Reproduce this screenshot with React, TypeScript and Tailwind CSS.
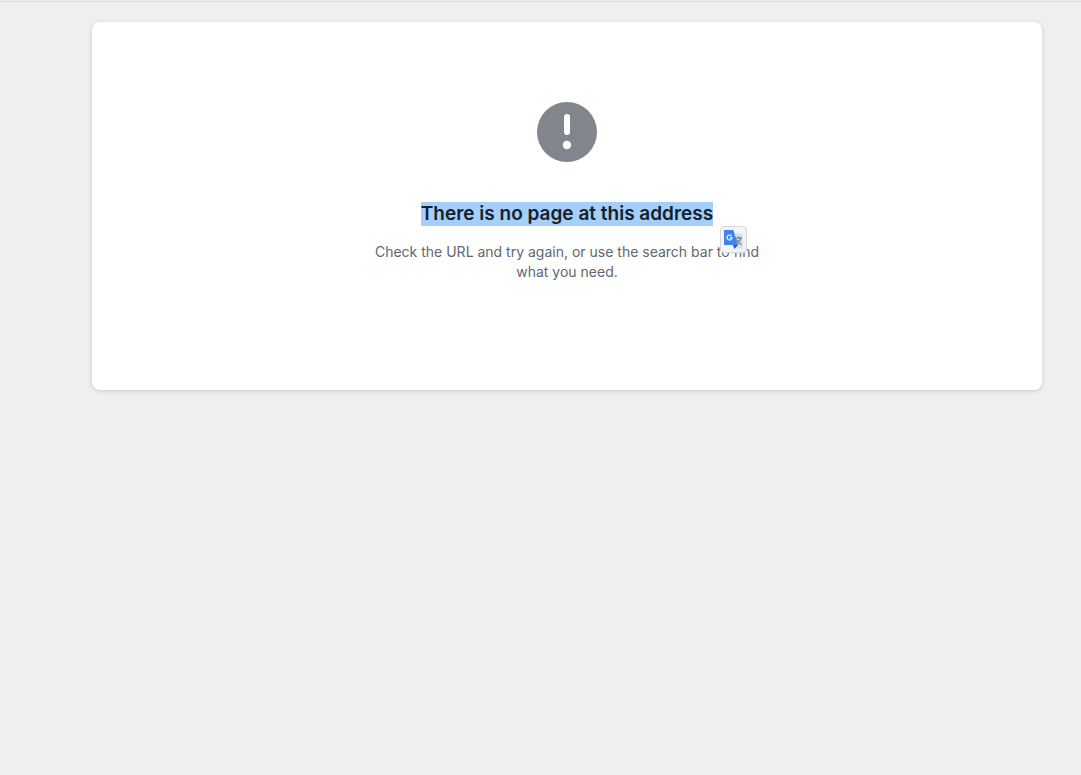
export default function App() {
  return (
    <div className="min-h-screen bg-[#eeeff1] font-['Inter',sans-serif]">
      <header className="h-0.5 border-b border-[#d9dbde]" />
      <main className="pt-5 pr-[39px] pb-5 pl-[92px]">
        <section className="flex flex-col items-center rounded-lg bg-white px-4 pt-20 pb-[108px] text-center shadow-[0_1px_4px_rgba(0,0,0,0.16)]">
          <svg viewBox="0 0 60 60" className="size-[60px]" aria-hidden="true">
            <circle cx="30" cy="30" r="30" fill="#81858c" />
            <rect x="27" y="12" width="6" height="21" rx="3" fill="#fff" />
            <circle cx="30" cy="43" r="4.2" fill="#fff" />
          </svg>
          <div className="relative mt-10">
            <h1 className="bg-[#a4cffa] text-[19px] leading-6 font-semibold text-[#14202b]">
              There is no page at this address
            </h1>
            <button
              type="button"
              aria-label="Translate"
              className="absolute top-6 left-full ml-[7px] flex size-[27px] items-center justify-center rounded border border-[#d6d8dc] bg-[#f3f4f6]"
            >
              <svg viewBox="0 0 19 19" className="size-[19px]" aria-hidden="true">
                <path d="M8 3.5h10.3a.7.7 0 0 1 .7.7v13.6a.7.7 0 0 1-.7.7H10z" fill="#dcdfe3" />
                <path d="M11 8h7M14.5 6.5V8M16.8 8c-.6 2.700-2.300 4.700-4.500 6M12.800 9.500c.8 2.200 2.300 3.800 4.500 5" fill="none" stroke="#5f6f7c" strokeWidth="1.1" />
                <path d="M9 15h5l-3.700 4z" fill="#2855c8" />
                <path d="M.7 0h8.600L14 15H.7a.7.7 0 0 1-.7-.7V.7A.7.7 0 0 1 .7 0z" fill="#4083ee" />
                <path d="M7.600 6.100A2.500 2.500 0 1 0 8 7.900H5.700" fill="none" stroke="#fff" strokeWidth="1.1" />
              </svg>
            </button>
          </div>
          <p className="mt-4 max-w-[400px] text-sm leading-5 text-[#606770]">
            Check the URL and try again, or use the search bar to find what you need.
          </p>
        </section>
      </main>
    </div>
  );
}
